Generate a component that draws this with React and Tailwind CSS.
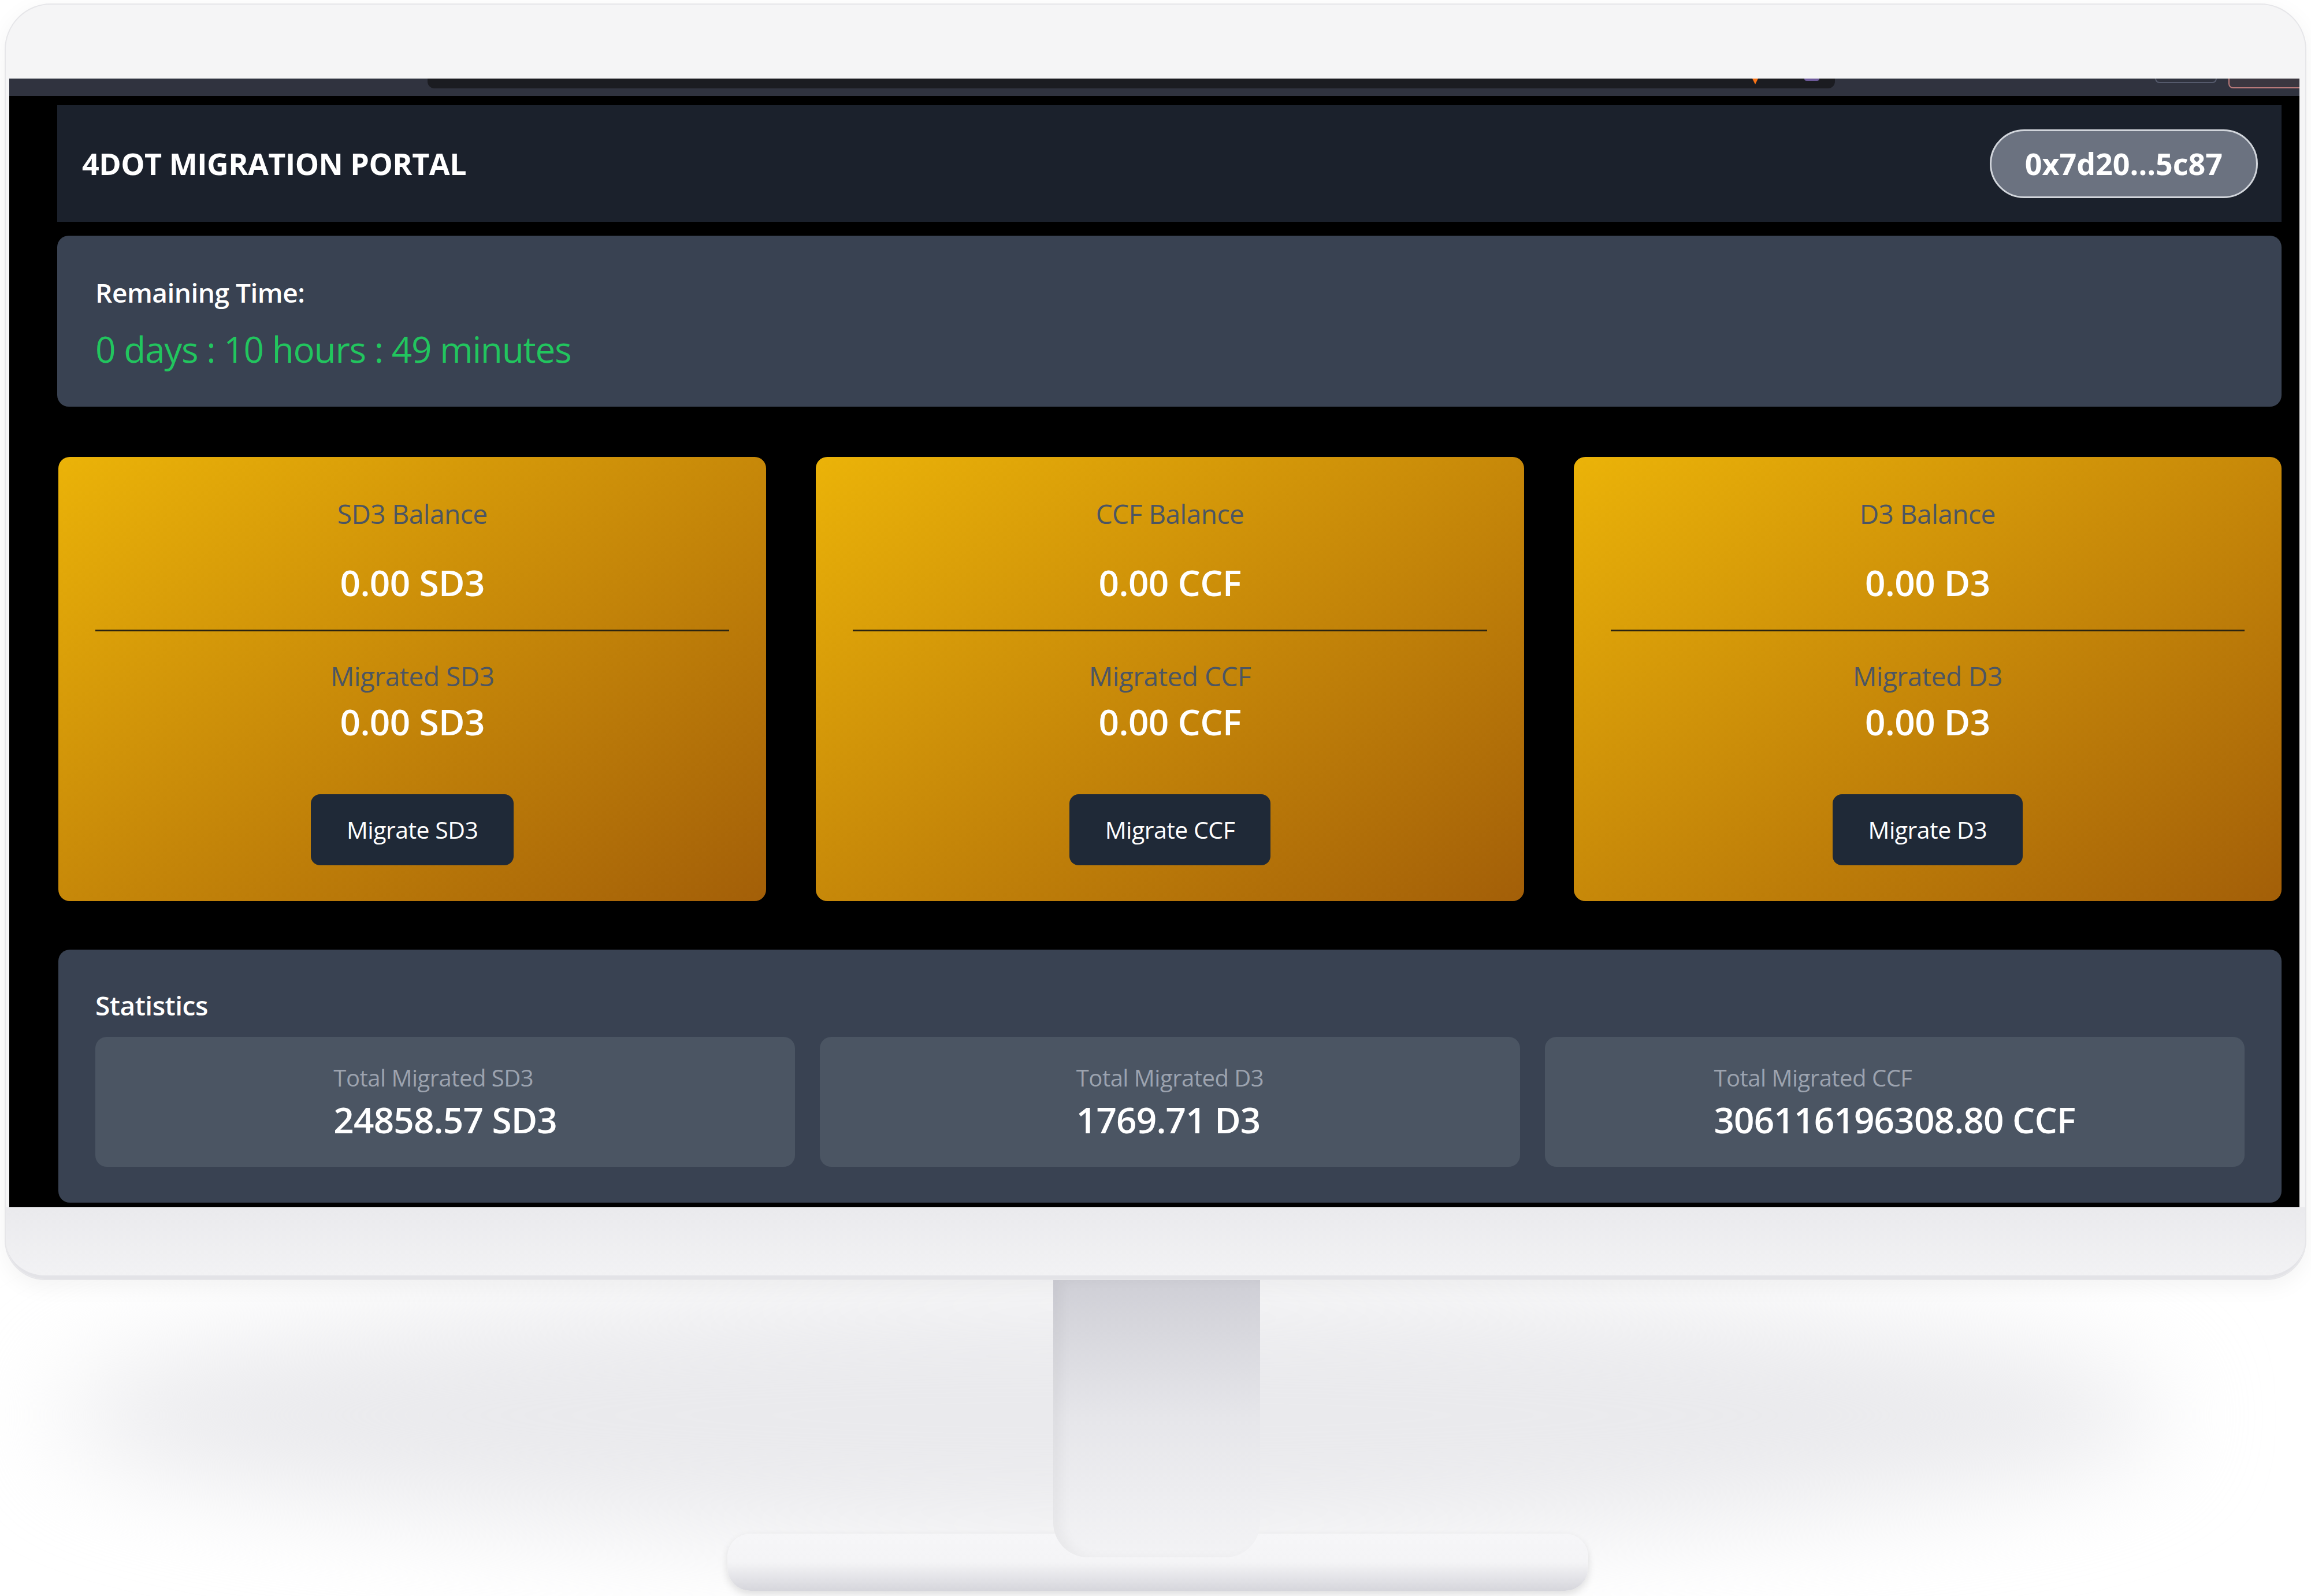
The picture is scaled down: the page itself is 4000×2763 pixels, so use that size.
import React from 'react';

const cards = ['SD3', 'CCF', 'D3'];

const stats = [
  { label: 'Total Migrated SD3', value: '24858.57 SD3' },
  { label: 'Total Migrated D3', value: '1769.71 D3' },
  { label: 'Total Migrated CCF', value: '306116196308.80 CCF' },
];

function BrowserBar() {
  return (
    <div className="h-[30px] bg-[#30333f] flex items-start shrink-0">
      <div className="w-[724px] shrink-0" />
      <div className="w-[2436px] h-[17px] bg-[#1b1c21] rounded-b-[12px] flex items-start">
        <div className="w-[2293px]" />
        <div className="w-0 h-0 border-l-[5px] border-r-[5px] border-t-[10px] border-l-transparent border-r-transparent border-t-[#f97316]" />
        <div className="w-[80px]" />
        <div className="w-[26px] h-[4px] bg-[#6d5a9a] rounded-b" />
      </div>
      <div className="w-[554px] shrink-0" />
      <div className="w-[107px] h-[8px] border-2 border-t-0 border-[#555a6c] rounded-b-[8px]" />
      <div className="w-[20px] shrink-0" />
      <div className="flex-1 h-[17px] bg-[#3b3740] border-2 border-t-0 border-r-0 border-[#b97a7a] rounded-bl-[8px]" />
    </div>
  );
}

function TokenCard({ token }) {
  return (
    <div className="rounded-[20px] bg-gradient-to-br from-[#ebb308] to-[#a35f08] px-[64px] py-[62px] flex flex-col items-center text-center">
      <div className="text-[46px] leading-[72px] text-[#4b5563] tracking-[-0.5px]">{token} Balance</div>
      <div className="mt-[42px] text-[62px] leading-[83px] font-semibold text-white tracking-[-0.5px]">0.00 {token}</div>
      <div className="w-full mt-[40px] mb-[41px] h-[3px] bg-[#2b2410]" />
      <div className="text-[46px] leading-[72px] text-[#4b5563] tracking-[-0.5px]">Migrated {token}</div>
      <div className="mt-[2px] text-[62px] leading-[83px] font-semibold text-white tracking-[-0.5px]">0.00 {token}</div>
      <button className="mt-[84px] h-[123px] px-[62px] rounded-[16px] bg-[#1f2937] text-white text-[41px] font-medium tracking-[-0.5px]">
        Migrate {token}
      </button>
    </div>
  );
}

function Screen() {
  return (
    <div className="w-[3964px] h-[1954px] bg-black flex flex-col overflow-hidden font-['Open_Sans','Noto_Sans',sans-serif]">
      <BrowserBar />
      <div className="flex-1 flex flex-col pl-[83px] pr-[31px] pt-[16px]">
        <header className="h-[202px] bg-[#1b212c] flex items-center justify-between pl-[43px] pr-[41px] shrink-0">
          <h1 className="text-[52px] font-bold text-white tracking-[-0.5px]">4DOT MIGRATION PORTAL</h1>
          <div className="h-[119px] px-[58px] flex items-center rounded-full bg-[#6b7280] border-[3px] border-[#d1d5db] text-white text-[52px] font-bold">
            0x7d20...5c87
          </div>
        </header>

        <section className="mt-[24px] h-[296px] bg-[#394252] rounded-[20px] px-[66px] pt-[62px] shrink-0">
          <div className="text-[46px] leading-[72px] font-semibold text-white tracking-[-0.5px]">Remaining Time:</div>
          <div className="mt-[21px] text-[62px] leading-[83px] text-[#22c55e] tracking-[-1.2px]">0 days : 10 hours : 49 minutes</div>
        </section>

        <div className="mt-[87px] grid grid-cols-3 gap-[86px] shrink-0 pl-[2px]">
          {cards.map((t) => (
            <TokenCard key={t} token={t} />
          ))}
        </div>

        <section className="mt-[84px] bg-[#394252] rounded-[20px] px-[64px] pt-[60px] pb-[62px] ml-[2px] shrink-0">
          <div className="text-[46px] leading-[72px] font-semibold text-white tracking-[-0.5px]">Statistics</div>
          <div className="mt-[19px] grid grid-cols-3 gap-[43px]">
            {stats.map((s) => (
              <div key={s.label} className="h-[225px] rounded-[20px] bg-[#4b5563] flex items-center justify-center">
                <div className="text-left">
                  <div className="text-[40px] leading-[62px] text-[#9ca3af] tracking-[-0.5px]">{s.label}</div>
                  <div className="text-[62px] leading-[83px] font-semibold text-white tracking-[-0.8px]">{s.value}</div>
                </div>
              </div>
            ))}
          </div>
        </section>
      </div>
    </div>
  );
}

export default function App() {
  return (
    <div className="w-[4000px] h-[2763px] bg-white relative overflow-hidden">
      {/* soft floor shadow behind the stand */}
      <div className="absolute left-[100px] top-[2230px] w-[3650px] h-[440px] rounded-[50%] bg-[#eaeaed] blur-[90px]" />

      <div className="relative flex flex-col items-start pl-[8px] pt-[6px]">
        <div className="w-[3984px] rounded-t-[80px] rounded-b-[70px] bg-[#f5f5f6] border-2 border-[#e6e6e9] shadow-[0_10px_40px_rgba(0,0,0,0.05)] flex flex-col">
          <div className="h-[128px]" />
          <div className="flex pl-[6px]">
            <Screen />
          </div>
          <div className="h-[124px] rounded-b-[68px] bg-gradient-to-b from-[#eaeaed] to-[#f2f2f4] border-b-[6px] border-[#e3e3e7]" />
        </div>

        <div className="w-full flex flex-col items-center">
          <div className="relative z-10 -ml-[4px] w-[358px] h-[480px] rounded-b-[60px] bg-gradient-to-b from-[#cfcfd6] via-[#e6e6ea] to-[#f3f3f5] shadow-[inset_14px_0_20px_rgba(0,0,0,0.04)]" />
          <div className="-mt-[41px] w-[1490px] h-[99px] rounded-[40px] bg-gradient-to-b from-[#f6f6f8] via-[#f4f4f6] to-[#d6d6dc] shadow-[0_6px_14px_rgba(0,0,0,0.12)]" />
        </div>
      </div>
    </div>
  );
}
